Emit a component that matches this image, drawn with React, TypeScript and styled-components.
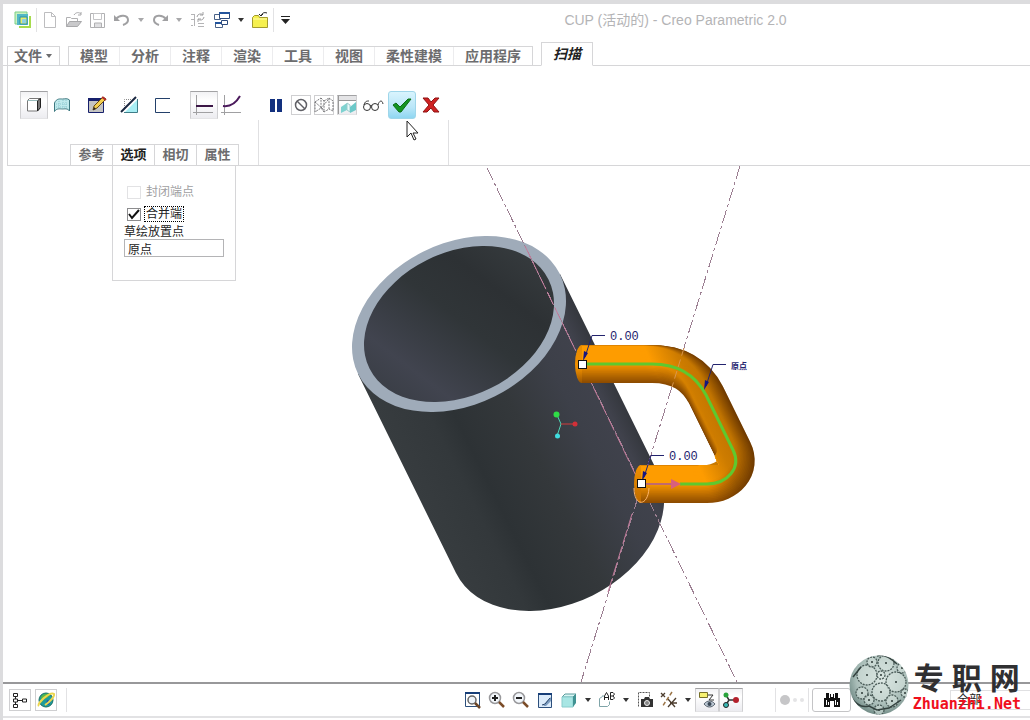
import React from "react";
import styled, { createGlobalStyle, css } from "styled-components";

const SANS = '"Liberation Sans", "Noto Sans CJK SC", sans-serif';
const LINE = "#d6d6d8";
const FRAME = "#dcdcde";

const GlobalStyle = createGlobalStyle`
  * { box-sizing: border-box; }
  body { margin: 0; background: #fff; font-family: ${SANS}; font-size: 12px; color: #333; }
  button, input, select { font: inherit; color: inherit; }
`;

const Window = styled.div`
  position: relative;
  display: flex;
  flex-direction: column;
  min-height: 100vh;
  border-top: 4px solid ${FRAME};
  border-left: 3px solid ${FRAME};
  overflow: hidden;
`;

const TitleBar = styled.header`
  display: flex;
  align-items: center;
  height: 32px;
  padding-left: 8px;
`;

const Title = styled.h1`
  flex: 1;
  margin: 0;
  padding-left: 24px;
  text-align: center;
  font-size: 14px;
  font-weight: 400;
  line-height: 16px;
  color: #b4b4b6;
  white-space: nowrap;
`;

const IconButton = styled.button<{ $w?: number; $h?: number; $look?: "boxed" | "pressed" | "hot" | "raised" }>`
  display: flex;
  align-items: center;
  justify-content: center;
  flex: none;
  width: ${(p) => p.$w ?? 24}px;
  height: ${(p) => p.$h ?? 24}px;
  padding: 0;
  border: 1px solid transparent;
  background: none;
  svg { display: block; flex: none; }
  ${(p) => p.$look === "boxed" && css`border-color: #cfcfd1;`}
  ${(p) => p.$look === "raised" && css`border-color: #c4c4c6; border-radius: 3px;`}
  ${(p) =>
    p.$look === "pressed" &&
    css`
      border-color: #a2a2a4 #d0d0d2 #e4e4e6;
      background: linear-gradient(#f2f2f4, #fff 35%, #ececf0);
    `}
  ${(p) =>
    p.$look === "hot" &&
    css`
      border-color: #9fd6ea;
      border-radius: 3px;
      background: linear-gradient(#d9f4fd, #b9e6f8 60%, #8fd6f1);
    `}
`;

const Divider = styled.span<{ $space?: number }>`
  flex: none;
  width: 1px;
  height: 24px;
  margin: 0 ${(p) => p.$space ?? 1}px;
  background: #e2e2e4;
`;

const TabBar = styled.nav`
  display: flex;
  align-items: flex-end;
  height: 30px;
  padding-left: 4px;
  box-shadow: inset 0 -1px ${LINE};
`;

const tabText = css`
  padding: 0;
  border: 0;
  background: none;
  font-size: 14px;
  font-weight: 700;
  line-height: 18px;
  color: #6c6c6e;
  white-space: nowrap;
`;

const FileButton = styled.button`
  ${tabText}
  display: flex;
  align-items: center;
  gap: 3px;
  height: 20px;
  padding: 0 6px;
  border: 1px solid ${LINE};
`;

const TabGroup = styled.div`
  display: flex;
  height: 20px;
  margin: 0 8px;
  border: 1px solid ${LINE};
`;

const Tab = styled.button`
  ${tabText}
  padding: 0 11px;
  & + & { border-left: 1px solid #ececee; }
`;

const ActiveTab = styled.button`
  ${tabText}
  height: 24px;
  padding: 0 11px;
  border: 1px solid ${LINE};
  border-bottom-color: #fff;
  background: #fff;
  font-style: italic;
  color: #222;
`;

const Ribbon = styled.section`
  display: flex;
  margin-left: 4px;
  height: 100px;
  border-left: 1px solid ${LINE};
  border-bottom: 1px solid ${LINE};
`;

const RibbonPart = styled.div<{ $w: number }>`
  display: flex;
  flex-direction: column;
  justify-content: space-between;
  width: ${(p) => p.$w}px;
  padding-top: 25px;
  background: linear-gradient(transparent 55%, #e0e0e2 55%) right / 1px 100% no-repeat;
`;

const Tools = styled.div<{ $pad: number }>`
  display: flex;
  align-items: center;
  height: 28px;
  padding-left: ${(p) => p.$pad}px;
`;

const ToolSet = styled.div<{ $gap?: number; $after?: number }>`
  display: flex;
  align-items: center;
  gap: ${(p) => p.$gap ?? 0}px;
  margin-right: ${(p) => p.$after ?? 0}px;
`;

const SubTabs = styled.div`
  display: flex;
  margin-left: 62px;
  height: 21px;
`;

const SubTab = styled.button<{ $open?: boolean; $last?: boolean }>`
  width: ${(p) => (p.$last ? 43 : 42)}px;
  padding: 0;
  border: 1px solid ${LINE};
  border-right-width: ${(p) => (p.$last ? 1 : 0)}px;
  border-bottom: 0;
  background: #fff;
  font-size: 13px;
  font-weight: 700;
  line-height: 18px;
  color: ${(p) => (p.$open ? "#222" : "#6c6c6e")};
`;

const SubTabSlot = styled.div`
  position: relative;
  display: flex;
`;

const OptionsPanel = styled.form`
  position: absolute;
  z-index: 2;
  top: 100%;
  left: 0;
  display: flex;
  flex-direction: column;
  width: 124px;
  height: 116px;
  padding: 15px 11px 0;
  border: 1px solid ${LINE};
  background: #fff;
`;

const CheckRow = styled.label<{ $off?: boolean }>`
  display: flex;
  align-items: center;
  gap: 3px;
  height: 22px;
  padding-left: 3px;
  line-height: 14px;
  color: ${(p) => (p.$off ? "#a0a0a2" : "#222")};
`;

const CheckText = styled.span<{ $focus?: boolean }>`
  padding: 0 1px;
  border: 1px ${(p) => (p.$focus ? "dotted #000" : "solid transparent")};
`;

const CheckBox = styled.input`
  appearance: none;
  width: 14px;
  height: 13px;
  margin: 0;
  border: 1px solid #8c8c8e;
  background: #fff;
  &:disabled { border-color: #e2e2e4; }
  &:checked {
    background: url("data:image/svg+xml,%3Csvg xmlns='http://www.w3.org/2000/svg' viewBox='0 0 12 11'%3E%3Cpath d='M1 5l3 4 7-8' fill='none' stroke='%23111' stroke-width='2'/%3E%3C/svg%3E") center / 12px 11px no-repeat;
  }
`;

const FieldLabel = styled.label`
  line-height: 14px;
  color: #222;
`;

const Field = styled.input`
  width: 100px;
  height: 18px;
  padding: 0 3px;
  border: 1px solid #b4b4b6;
  background: #fff;
  line-height: 14px;
  color: #222;
`;

const Viewport = styled.main`
  flex: 1;
  min-height: 516px;
`;

const Scene = styled.svg`
  display: block;
  width: 100%;
  height: 516px;
`;

const StatusBar = styled.footer`
  display: flex;
  align-items: center;
  height: 36px;
  margin-bottom: 2px;
  border-top: 2px solid #98989a;
  border-bottom: 2px solid #e2e2e4;
`;

const StatusLeft = styled.div`
  display: flex;
  align-items: center;
  gap: 4px;
  flex: 1;
  padding-left: 6px;
`;

const StatusRight = styled.div`
  display: flex;
  align-items: center;
  gap: 2px;
  width: 256px;
  margin-left: 31px;
`;

const Filter = styled.select`
  appearance: none;
  width: 80px;
  height: 20px;
  margin-left: auto;
  padding: 0 6px;
  border: 1px solid #e0e0e2;
  border-right: 0;
  background: #fff;
  color: #222;
`;

const Watermark = styled.div`
  position: absolute;
  right: 9px;
  bottom: 5px;
  display: flex;
  align-items: flex-end;
  pointer-events: none;
`;

const WatermarkText = styled.div`
  display: flex;
  flex-direction: column;
  align-items: center;
  margin-left: 4px;
  padding-bottom: 2px;
`;

const Brand = styled.strong`
  display: flex;
  gap: 8px;
  font-size: 30px;
  line-height: 32px;
  color: #303032;
`;

const BrandUrl = styled.span`
  font: 700 15px/18px "DejaVu Sans Mono", monospace;
  color: #f0101c;
`;

const Pointer = styled.svg`
  position: absolute;
  left: 403px;
  top: 116px;
  z-index: 3;
  pointer-events: none;
`;

const Svg = ({ w = 18, h = 18, children }: { w?: number; h?: number; children: React.ReactNode }) => (
  <svg width={w} height={h} viewBox={`0 0 ${w} ${h}`} fill="none" aria-hidden="true">{children}</svg>
);

const Caret = ({ color = "#333" }: { color?: string }) => (
  <Svg w={8} h={6}><path d="M1 1h6L4 5z" fill={color} /></Svg>
);

const quickAccess: { name: string; w?: number; icon: React.ReactNode; after?: boolean }[] = [
  {
    name: "Creo", after: true,
    icon: <Svg><path d="M1 1h12v12H1z" fill="#c9f0c0" stroke="#7ccf86" /><path d="M3 3h11v11H3z" fill="#52b8c6" /><path d="M6 6h7v7H6z" fill="#e7ee6a" stroke="#2c8fa6" /><path d="M8 8h4v4H8z" fill="#8fd0e0" /><path d="M16 5v11H5" stroke="#a7dc4e" strokeWidth="2" /></Svg>,
  },
  { name: "新建", icon: <Svg><path d="M3.500 1.500h7l4 4v11h-11zM10.500 1.500v4h4" stroke="#bdbdbf" /></Svg> },
  { name: "打开", icon: <Svg><path d="M1.500 15.500v-9h4l1 1h6v3" stroke="#b0b0b2" /><path d="M1.500 15.500l3-5h12l-4 5z" fill="#c9c9cb" stroke="#a8a8aa" /><path d="M9 4c2-3 5-3 7-1M16 1v3h-3" stroke="#a8a8aa" /></Svg> },
  { name: "保存", icon: <Svg><path d="M1.500 2.500h14v14h-14z" stroke="#b0b0b2" /><path d="M4.500 2.500h8v6h-8z" stroke="#c4c4c6" /><path d="M5.500 16v-4h7v4" fill="#e0e0e2" stroke="#b0b0b2" /></Svg> },
  { name: "撤消", icon: <Svg><path d="M3 8c4-5 12-4 12 1 0 3-2 4-5 5" stroke="#a0a0a2" strokeWidth="2" /><path d="M1 4v6h6z" fill="#a0a0a2" /></Svg> },
  { name: "撤消列表", w: 14, icon: <Caret color="#a8a8aa" /> },
  { name: "重做", icon: <Svg><path d="M15 8C11 3 3 4 3 9c0 3 2 4 5 5" stroke="#a0a0a2" strokeWidth="2" /><path d="M17 4v6h-6z" fill="#a0a0a2" /></Svg> },
  { name: "重做列表", w: 14, icon: <Caret color="#a8a8aa" /> },
  { name: "重新生成", icon: <Svg><path d="M2 3.500h4M2 8.500h4M5.500 4v11M2 14.500h2M9 12.500h6M9 15.500h6" stroke="#b4b4b6" /><path d="M8 6a3.500 3.500 0 016-2M15 6a3.500 3.500 0 01-6 2M14 1v3h-3M9 11V8h3" stroke="#a0a0a2" /></Svg> },
  { name: "窗口", icon: <Svg><path d="M1.500 3.500h6v5h-6zM2.500 11.500h7v5h-7z" fill="#fff" stroke="#4a6288" /><path d="M2 12h7" stroke="#23549c" strokeWidth="2" /><path d="M6.500 1.500h10v6h-10z" fill="#fff" stroke="#2c4a7c" /><path d="M6 2h11" stroke="#23549c" strokeWidth="2" /><path d="M8.500 9.500h6v4h-6z" fill="#fff" stroke="#2c4a7c" /></Svg> },
  { name: "窗口列表", w: 14, icon: <Caret /> },
  { name: "关闭", after: true, icon: <Svg><path d="M1.500 16.500v-10l2-2h4l1 2h8v10z" fill="#f6f04e" stroke="#a39b2c" /><path d="M2 8h14" stroke="#fffcae" /><path d="M16 2c-3-1-5 0-6 3M8 3l2 2 2-2" stroke="#222" /></Svg> },
  { name: "自定义", w: 22, icon: <Svg w={10} h={9}><path d="M0 .5h9" stroke="#222" /><path d="M0 3h9L4.500 8z" fill="#222" /></Svg> },
];

const tabs = ["模型", "分析", "注释", "渲染", "工具", "视图", "柔性建模", "应用程序"];

const SolidIcon = <Svg><path d="M2.500 4.500l2-2h11v9l-3 3.500h-10z" fill="#fff" stroke="#777" /><path d="M12.500 4.500l3-2v9l-3 3.500z" fill="#777" stroke="#222" /><path d="M2.500 4.500h10" stroke="#9bb" /></Svg>;
const SurfaceIcon = <Svg><path d="M1.500 15.500V7c2-5 6-4 8-4s5-1 7 1v11c-2-3-5-2-7-2s-6-1-8 2.500z" fill="#bfe9ec" stroke="#3d7880" /><path d="M3 8h12M3 11h12M6 5v8M10 4v8M13 4v8" stroke="#8fc9d0" strokeDasharray="1 1" /></Svg>;
const SketchIcon = <Svg w={20}><path d="M1.500 2.500h15v14h-15z" fill="#c4c4c2" stroke="#17206c" /><path d="M1 2h13v3H1z" fill="#17206c" /><path d="M6 14l1-4 9-9 3 2-9 9z" fill="#f3cf4e" stroke="#6b4a10" /><path d="M15 1l4 3" stroke="#b32b2b" strokeWidth="2" /><path d="M6 14l1-3 2 2z" fill="#222" /></Svg>;
const RemoveIcon = <Svg w={20}><path d="M5 16L17 4v12.500H5z" fill="#a8eef4" /><path d="M4.500 12V3.500h8" stroke="#888" strokeDasharray="1 1" /><path d="M4 16.500h13.500V3" stroke="#3f7d88" /><path d="M1 16L16 1" stroke="#1a2740" strokeWidth="2" /></Svg>;
const ThinIcon = <Svg><path d="M16 2.500H1.500v14H16" stroke="#23406a" /></Svg>;
const ConstantIcon = <Svg w={22} h={22}><path d="M3.500 1v20M0 18.500h20" stroke="#a0a0a2" /><path d="M3 12h17" stroke="#3b1646" strokeWidth="2" /></Svg>;
const VariableIcon = <Svg w={22} h={22}><path d="M3.500 1v20M0 18.500h20" stroke="#a0a0a2" /><path d="M2 12c8 1 13-3 17-10" stroke="#4b1a5c" strokeWidth="2" /></Svg>;

const PauseIcon = <Svg><path d="M3 3h5v13H3zM10 3h5v13h-5z" fill="#12307e" /></Svg>;
const NoneIcon = <Svg><circle cx="9" cy="9" r="5.500" stroke="#606066" strokeWidth="1.500" /><path d="M5 5l8 8" stroke="#606066" strokeWidth="1.500" /></Svg>;
const MeshIcon = <Svg w={20}><path d="M1 6l6-4v10l-6 4zM7 2l3 3v11l-3-4M10 5l5-3v11l-5 3M15 2l4 3v10l-4-2M1 6l9 8M7 12l8-9" stroke="#77777a" strokeDasharray="2 1" /></Svg>;
const AttachIcon = <Svg><path d="M0 0h18v4H0z" fill="#e4e4e6" /><path d="M0 4.500h18M.5 0v18" stroke="#999" /><path d="M3 11l6-4v7l-6 3z" fill="#7fd2d0" /><path d="M9 7l3 2v7l-3-2z" fill="#e8fafa" stroke="#9cc" /><path d="M12 11l6-5v8l-6 3z" fill="#6cc8c8" /></Svg>;
const GlassesIcon = <Svg w={22}><circle cx="5" cy="11" r="3.500" stroke="#333" /><circle cx="13" cy="11" r="3.500" stroke="#333" /><path d="M8 10c1-1 1-1 2 0M2 9c1-4 3-4 5-4M16 9c1-4 4-6 5-1" stroke="#333" /></Svg>;
const OkIcon = <Svg w={20}><path d="M1 9l3-2 4 4 8-8h3L9 16H7z" fill="#149421" stroke="#0b6d16" /></Svg>;
const CancelIcon = <Svg><path d="M1 2h5l3 4 4-4h4l-6 7 6 7h-5l-3-4-4 4H1l6-7z" fill="#cf2222" stroke="#8e1212" /></Svg>;

const lens = (mark: React.ReactNode) => (
  <Svg><circle cx="7" cy="7" r="5.500" fill="#f4f8fc" stroke="#99999c" strokeWidth="1.500" />{mark}<path d="M11 11l5 5" stroke="#7b4c28" strokeWidth="2.500" /></Svg>
);

const viewTools: { name: string; w?: number; pressed?: boolean; icon: React.ReactNode }[] = [
  { name: "重新调整", icon: <Svg><path d="M1.500 1.500h14v14h-14z" stroke="#2c4f7c" /><path d="M1 2h15" stroke="#173e78" strokeWidth="2" /><circle cx="8" cy="9" r="4" fill="#eef4fa" stroke="#666" strokeWidth="1.500" /><path d="M11 12l5 5" stroke="#6b4526" strokeWidth="2.500" /></Svg> },
  { name: "放大", icon: lens(<path d="M4 7h6M7 4v6" stroke="#222" strokeWidth="2" />) },
  { name: "缩小", icon: lens(<path d="M4 7h6" stroke="#222" strokeWidth="2" />) },
  { name: "重画", icon: <Svg><path d="M2.500 2.500h13v14h-13z" fill="#dcebfa" stroke="#2c4f7c" /><path d="M2 3h14" stroke="#173e78" strokeWidth="2" /><path d="M6 15c2 0 3-2 4-4l5-5v4l-5 5z" fill="#7c9cc0" /><path d="M6 14l3-1 5-6" stroke="#29466b" /></Svg> },
  { name: "显示样式", icon: <Svg><path d="M2 6l3-3h11l-3 3z" fill="#d9f7f5" stroke="#5a9b9c" /><path d="M2 6h11v10H2z" fill="#a8e6e4" stroke="#8cc" /><path d="M13 6l3-3v9l-3 4z" fill="#3f9292" /></Svg> },
  { name: "显示样式列表", w: 14, icon: <Caret /> },
  { name: "已命名视图", icon: <Svg><path d="M1.500 7.500l3-2M1.500 7.500v8h8l2-2v-3M4 5h2" stroke="#7fa4a8" /><g stroke="#222"><path d="M6.500 9V5l2-3.500 2 3.500v4M7 6.500h3M12.500 1.500v7h2.500l1.500-1.500-1.500-2 1.500-2L15 1.500zM12.500 5H15" /></g></Svg> },
  { name: "视图列表", w: 14, icon: <Caret /> },
  { name: "视图管理器", icon: <Svg><path d="M2.500 15.500v-14h11v5" stroke="#555" strokeDasharray="2 1" /><path d="M5 8h3l1-2h4l1 2h3v8H5z" fill="#333" /><circle cx="11" cy="12" r="2.500" fill="#888" stroke="#eee" /></Svg> },
  { name: "基准显示", icon: <Svg><path d="M1 2l4 4M5 2L1 6M8 8l7 8M16 7L8 16M10 12h7" stroke="#4c3d2e" strokeWidth="1.300" /><path d="M12 1L2 16" stroke="#9b7446" strokeWidth="1.500" strokeDasharray="4 2" /></Svg> },
  { name: "基准列表", w: 14, icon: <Caret /> },
  { name: "注释显示", pressed: true, icon: <Svg><path d="M1.500 1.500h8v5h-8z" fill="#f7f171" stroke="#77702a" /><path d="M10 4h5l-4 5h5" stroke="#333" /><path d="M6 13c3-4 8-4 11 0-3 4-8 4-11 0z" fill="#b8c4d0" stroke="#5c6670" /><circle cx="11.500" cy="13" r="2" fill="#394654" /></Svg> },
  { name: "旋转中心", pressed: true, icon: <Svg><path d="M4 4l3 5-3 5M7 9h7" stroke="#333" strokeWidth="1.500" /><circle cx="4" cy="4" r="2.500" fill="#29a33c" /><circle cx="4" cy="14" r="2.500" fill="#39b9b4" stroke="#222" /><circle cx="14" cy="9" r="3" fill="#b3202b" /></Svg> },
];

const TreeIcon = <Svg><path d="M4.500 4v11M4 9.500h8" stroke="#222" /><path d="M2.500 2.500h4v3h-4zM2.500 8h4v3h-4zM2.500 13.500h4v3h-4zM11.500 8h4v3h-4z" fill="#fff" stroke="#222" /></Svg>;
const BrowserIcon = <Svg><circle cx="9" cy="9" r="7" fill="#1e9a9c" stroke="#1a6f62" /><path d="M4 6c2-4 7-4 9-2l-3 3-4 1-1 4z" fill="#57b847" /><path d="M10 9l4 1-2 4-3-1z" fill="#1b5bb0" /><path d="M2 15C-1 13 13 0 17 3c1 2-4 8-9 11" stroke="#ecd64d" strokeWidth="2" /></Svg>;
const BinocularIcon = <Svg><path d="M3 2h3v5h1V3h1v3h2V3h1v4h1V2h3v5h2v9h-6v-6H7v6H1V7h2z" fill="#111" /><path d="M3.500 9v5M5.500 11v3M12.500 9v5M14.500 11v3" stroke="#fff" /></Svg>;

const HANDLE = "M582 364H652C680 364 696 376 706 395L733 450C742 468 727 484 707 484H641";
const SHADE_STEPS = 24;
const shadeColor = (t: number) => {
  const e = Math.min(1, t * 1.7);
  return `rgb(${Math.round(142 + 112 * e)}, ${Math.round(76 + 80 * e)}, 0)`;
};

const Handle = () => (
  <g fill="none">
    <clipPath id="handleClip"><path d="M582 345H770V503H641V465H719L688 402L650 395H582z" /></clipPath>
    <ellipse cx="582" cy="364" rx="7" ry="19" fill="url(#capTop)" />
    <ellipse cx="641" cy="484" rx="7" ry="19" fill="url(#capLow)" />
    <path d="M700 466Q712 465 717 461L712 448L724 452V470H700z" fill="#c87a00" />
    <g clipPath="url(#handleClip)">
      {Array.from({ length: SHADE_STEPS }, (_, i) => (
        <path
          key={i}
          d={HANDLE}
          stroke={shadeColor(i / (SHADE_STEPS - 1))}
          strokeWidth={38 - i * 1.5}
          transform={`translate(${-i * 0.68} ${-i * 0.68})`}
        />
      ))}
      <path d={HANDLE} stroke="url(#diagonal)" strokeWidth="38" />
    </g>
  </g>
);

const Mug = () => (
  <g>
    <path d="M358 374L456 573A112.600 80.700 -26.500 0 0 658 473L560 274z" fill="url(#mugBody)" />
    <ellipse cx="459" cy="324" rx="112.600" ry="80.700" transform="rotate(-26.500 459 324)" fill="#9fabb9" />
    <ellipse cx="459" cy="324" rx="100" ry="71.600" transform="rotate(-26.500 459 324)" fill="url(#mugInside)" />
  </g>
);

const Leader = ({ x, y, label, small }: { x: number; y: number; label: string; small?: boolean }) => (
  <g>
    <path d={`M${x + 22} ${y - 28.5}h-13L${x + 2} ${y - 7}`} fill="none" stroke="#23236e" />
    <path d={`M${x} ${y - 3}l1-10 4 2z`} fill="#161680" />
    <text
      x={x + 27}
      y={y - 24}
      fill="#23236e"
      fontFamily='"Liberation Mono", "Noto Sans CJK SC", monospace'
      fontSize={small ? 8 : 12}
      fontWeight={small ? 700 : 400}
    >
      {label}
    </text>
  </g>
);

const Model = () => (
  <Scene viewBox="3 166 1027 516" preserveAspectRatio="xMinYMin meet" role="img" aria-label="CUP">
    <defs>
      <linearGradient id="mugBody" gradientUnits="userSpaceOnUse" x1="408" y1="474" x2="610" y2="373">
        <stop offset="0" stopColor="#373c3f" />
        <stop offset="0.200" stopColor="#33383b" />
        <stop offset="0.300" stopColor="#2d3235" />
        <stop offset="0.550" stopColor="#34383b" />
        <stop offset="0.780" stopColor="#3d4049" />
        <stop offset="0.920" stopColor="#40424c" />
        <stop offset="1" stopColor="#34373d" />
      </linearGradient>
      <linearGradient id="mugInside" gradientUnits="userSpaceOnUse" x1="369" y1="369" x2="549" y2="279">
        <stop offset="0" stopColor="#3a3e46" />
        <stop offset="0.180" stopColor="#41444f" />
        <stop offset="0.520" stopColor="#303538" />
        <stop offset="0.750" stopColor="#2d3134" />
        <stop offset="1" stopColor="#363b3e" />
      </linearGradient>
      <linearGradient id="capTop" x1="0" y1="0" x2="0" y2="1">
        <stop offset="0" stopColor="#e88c00" /><stop offset="0.600" stopColor="#f09000" /><stop offset="1" stopColor="#9a5500" />
      </linearGradient>
      <linearGradient id="capLow" x1="0" y1="0" x2="0" y2="1">
        <stop offset="0" stopColor="#f29200" /><stop offset="1" stopColor="#c06c00" />
      </linearGradient>
      <linearGradient id="diagonal" gradientUnits="userSpaceOnUse" x1="672" y1="408" x2="742" y2="376">
        <stop offset="0" stopColor="#3a1c00" stopOpacity="0" />
        <stop offset="0.350" stopColor="#3a1c00" stopOpacity="0.250" />
        <stop offset="1" stopColor="#3a1c00" stopOpacity="0.450" />
      </linearGradient>
    </defs>
    <Mug />
    <g stroke="#9c7f92" strokeDasharray="14 3 3 3" shapeRendering="crispEdges">
      <path d="M487 168L737 682" />
      <path d="M740 166L581 682" />
    </g>
    <path d="M525 246L586 372M586 372L640 484M632 514L608 592" stroke="#c47c9c" strokeDasharray="14 3" />
    <Handle />
    <path d="M684 348L672 387" stroke="#d9964e" strokeDasharray="8 4" />
    <path d="M582 364H652C680 364 696 376 706 395L733 450C742 468 727 484 707 484H680" fill="none" stroke="#5fc82e" strokeWidth="3" />
    <path d="M634 488c0 19 14 19 15 0" fill="none" stroke="#ffb56a" />
    <path d="M646 484h26" stroke="#c06a6e" strokeWidth="2" />
    <path d="M671 479l10 5-10 5z" fill="#d8607c" />
    <Leader x={583} y={364} label="0.00" />
    <Leader x={642} y={484} label="0.00" />
    <Leader x={704} y={393} label="原点" small />
    <g fill="#fff" stroke="#111" shapeRendering="crispEdges">
      <path d="M578.500 360.500h8v8h-8zM637.500 479.500h8v8h-8z" />
    </g>
    <g>
      <path d="M557 415l4 9-4 12" fill="none" stroke="#4fd2b4" />
      <path d="M561 424h14" stroke="#d23a3a" />
      <circle cx="556.500" cy="414.500" r="3" fill="#2fdc46" />
      <circle cx="575" cy="424" r="2.500" fill="#d23038" />
      <circle cx="557.500" cy="436" r="2.500" fill="#3fdde0" />
    </g>
  </Scene>
);

const gears: [number, number, number][] = [
  [18, 20, 10], [37, 8, 8], [47, 27, 10], [32, 37, 9], [32, 20, 4], [13, 38, 6], [20, 45, 5], [43, 46, 6], [23, 7, 5], [53, 13, 5], [30, 55, 5], [56, 38, 4],
];

const Sphere = () => (
  <svg width="60" height="60" viewBox="0 0 60 60" aria-hidden="true">
    <defs>
      <radialGradient id="ball" cx="0.550" cy="0.400" r="0.620">
        <stop offset="0" stopColor="#dfeae6" /><stop offset="0.700" stopColor="#a9bdb8" /><stop offset="1" stopColor="#6f8984" />
      </radialGradient>
      <clipPath id="ballClip"><circle cx="30" cy="30" r="29.500" /></clipPath>
    </defs>
    <circle cx="30" cy="30" r="29.500" fill="url(#ball)" />
    <g clipPath="url(#ballClip)">
      {gears.map(([x, y, r]) => (
        <g key={`${x}-${y}`}>
          <circle cx={x} cy={y} r={r} fill="#d3e1dc" fillOpacity="0.600" stroke="#4a5b58" strokeWidth="1.300" strokeDasharray="2 1" />
          <circle cx={x} cy={y} r="1" fill="#2c3836" />
        </g>
      ))}
      <path d="M2 42q8 12 18 9l8 4 12-2 12-8M28 1q8-3 20 8M4 22l8-10" fill="none" stroke="#34423f" strokeWidth="1.500" />
    </g>
  </svg>
);

export default function App() {
  return (
    <Window>
      <GlobalStyle />
      <TitleBar>
        {quickAccess.map((q) => (
          <React.Fragment key={q.name}>
            <IconButton $w={q.w} aria-label={q.name}>{q.icon}</IconButton>
            {q.after && <Divider />}
          </React.Fragment>
        ))}
        <Title>CUP (活动的) - Creo Parametric 2.0</Title>
      </TitleBar>

      <TabBar>
        <FileButton>文件<Caret color="#6c6c6e" /></FileButton>
        <TabGroup>{tabs.map((t) => <Tab key={t}>{t}</Tab>)}</TabGroup>
        <ActiveTab>扫描</ActiveTab>
      </TabBar>

      <Ribbon>
        <RibbonPart $w={251}>
          <Tools $pad={12}>
            <ToolSet $after={7}>
              <IconButton $w={28} $h={28} $look="pressed" aria-label="实体">{SolidIcon}</IconButton>
              <IconButton $w={28} $h={28} aria-label="曲面">{SurfaceIcon}</IconButton>
            </ToolSet>
            <ToolSet $gap={5} $after={13}>
              <IconButton $w={28} $h={28} aria-label="草绘">{SketchIcon}</IconButton>
              <IconButton $w={28} $h={28} aria-label="移除材料">{RemoveIcon}</IconButton>
              <IconButton $w={28} $h={28} aria-label="薄板">{ThinIcon}</IconButton>
            </ToolSet>
            <ToolSet>
              <IconButton $w={28} $h={28} $look="pressed" aria-label="恒定截面">{ConstantIcon}</IconButton>
              <IconButton $w={28} $h={28} aria-label="可变截面">{VariableIcon}</IconButton>
            </ToolSet>
          </Tools>
          <SubTabs>
            <SubTab>参考</SubTab>
            <SubTabSlot>
              <SubTab $open>选项</SubTab>
              <OptionsPanel>
                <CheckRow $off>
                  <CheckBox type="checkbox" disabled />
                  <CheckText>封闭端点</CheckText>
                </CheckRow>
                <CheckRow>
                  <CheckBox type="checkbox" defaultChecked />
                  <CheckText $focus>合并端</CheckText>
                </CheckRow>
                <FieldLabel htmlFor="origin">草绘放置点</FieldLabel>
                <Field id="origin" defaultValue="原点" />
              </OptionsPanel>
            </SubTabSlot>
            <SubTab>相切</SubTab>
            <SubTab $last>属性</SubTab>
          </SubTabs>
        </RibbonPart>
        <RibbonPart $w={190}>
          <Tools $pad={3}>
            <ToolSet $after={1}>
              <IconButton $w={28} $h={28} aria-label="暂停">{PauseIcon}</IconButton>
            </ToolSet>
            <ToolSet $gap={3} $after={3}>
              <IconButton $w={20} $h={20} $look="boxed" aria-label="无预览">{NoneIcon}</IconButton>
              <IconButton $w={20} $h={20} $look="boxed" aria-label="分离">{MeshIcon}</IconButton>
              <IconButton $w={20} $h={20} $look="pressed" aria-label="连接">{AttachIcon}</IconButton>
              <IconButton $w={25} aria-label="特征预览">{GlassesIcon}</IconButton>
            </ToolSet>
            <ToolSet $gap={1}>
              <IconButton $w={28} $h={28} $look="hot" aria-label="确定">{OkIcon}</IconButton>
              <IconButton $w={28} $h={28} aria-label="取消">{CancelIcon}</IconButton>
            </ToolSet>
          </Tools>
        </RibbonPart>
      </Ribbon>

      <Viewport><Model /></Viewport>

      <StatusBar>
        <StatusLeft>
          <IconButton $w={22} $h={22} $look="boxed" aria-label="模型树">{TreeIcon}</IconButton>
          <IconButton $w={22} $h={22} $look="boxed" aria-label="浏览器">{BrowserIcon}</IconButton>
          <Divider $space={5} />
        </StatusLeft>
        {viewTools.map((v) => (
          <IconButton key={v.name} $w={v.w} $look={v.pressed ? "pressed" : undefined} aria-label={v.name}>{v.icon}</IconButton>
        ))}
        <StatusRight>
          <Divider />
          <Svg w={26} h={12}><circle cx="6" cy="6" r="5" fill="#c6c6c8" /><circle cx="16" cy="6" r="2" fill="#e4e4e6" /><circle cx="23" cy="6" r="2" fill="#e4e4e6" /></Svg>
          <Divider />
          <IconButton $w={39} $look="raised" aria-label="查找">{BinocularIcon}</IconButton>
          <Filter aria-label="过滤器" defaultValue="全部"><option>全部</option></Filter>
        </StatusRight>
      </StatusBar>

      <Watermark>
        <Sphere />
        <WatermarkText>
          <Brand><span>专</span><span>职</span><span>网</span></Brand>
          <BrandUrl>Zhuanzhi.Net</BrandUrl>
        </WatermarkText>
      </Watermark>

      <Pointer width="13" height="22" viewBox="0 0 13 22">
        <path d="M1 1v16l4-4 3 7 2-1-3-6h5z" fill="#fff" stroke="#222" />
      </Pointer>
    </Window>
  );
}
